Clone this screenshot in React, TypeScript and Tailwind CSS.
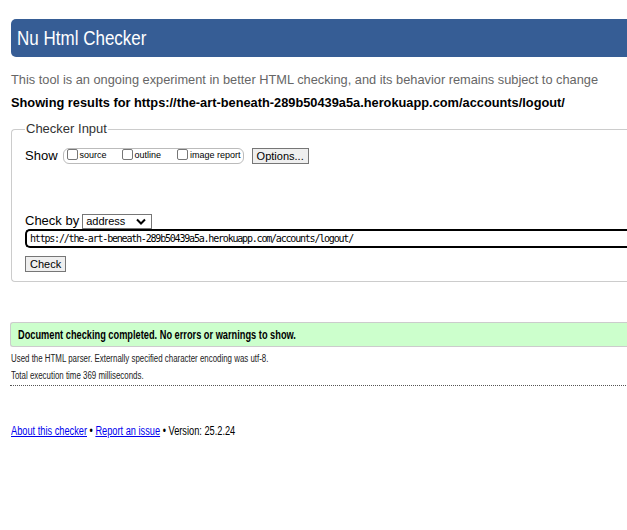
export default function App() {
  return (
    <div className="w-full h-[530px] overflow-hidden bg-white font-['Liberation_Sans',Arial,sans-serif] text-black">
      <div className="w-[700px] pl-[11px] pt-[19px]">
        <h1 className="h-[38px] rounded-l-[5px] bg-[#365d95] pl-[6px] text-[21px] leading-[38px] text-white">
          <span className="inline-block origin-left scale-x-[0.81] whitespace-nowrap">Nu Html Checker</span>
        </h1>

        <p className="mt-[14px] text-[12.8px] leading-[18px] text-[#666]">
          This tool is an ongoing experiment in better HTML checking, and its behavior remains subject to change
        </p>
        <p className="mt-[5px] text-[12.8px] font-bold leading-[18px]">
          Showing results for https://the-art-beneath-289b50439a5a.herokuapp.com/accounts/logout/
        </p>

        {/* Checker input fieldset */}
        <fieldset className="mt-[9px] h-[161px] rounded-l-[4px] border border-r-0 border-[#ccc] pl-[13px]">
          <legend className="px-[1px] text-[13px] leading-[16px] text-[#333]">Checker Input</legend>

          <div className="mt-[11px] flex h-[16px] items-center">
            <span className="text-[13px] leading-[16px]">Show</span>
            <div className="ml-[5px] flex h-[16px] items-center rounded-[6px] border border-[#bbb] pl-[3px] pr-[2px] text-[9px]">
              <label className="flex items-center">
                <span className="mb-[3px] h-[11px] w-[11px] rounded-[2px] border border-[#767676]" />
                <span className="ml-[2px]">source</span>
              </label>
              <label className="ml-[15px] flex items-center">
                <span className="mb-[3px] h-[11px] w-[11px] rounded-[2px] border border-[#767676]" />
                <span className="ml-[2px]">outline</span>
              </label>
              <label className="ml-[16px] flex items-center">
                <span className="mb-[3px] h-[11px] w-[11px] rounded-[2px] border border-[#767676]" />
                <span className="ml-[2px]">image report</span>
              </label>
            </div>
            <button className="ml-[8px] h-[16px] border border-[#767676] bg-[#efefef] px-[4px] text-[11px] leading-[14px]">
              Options...
            </button>
          </div>

          <div className="mt-[49px] flex h-[16px] items-center">
            <span className="text-[13px] leading-[16px]">Check by</span>
            <div className="ml-[3px] flex h-[15px] w-[70px] items-center justify-between border border-[#767676] pl-[3px] pr-[5px] text-[11px]">
              <span>address</span>
              <svg width="10" height="7" viewBox="0 0 10 7">
                <path d="M1 1.5 L5 5.5 L9 1.5" fill="none" stroke="#000" strokeWidth="2" />
              </svg>
            </div>
          </div>

          <div className="mt-0 flex h-[19px] items-center rounded-l-[5px] border-2 border-r-0 border-black pl-[3px] font-['DejaVu_Sans_Mono',monospace] text-[10px] tracking-[-1.2px]">
            https://the-art-beneath-289b50439a5a.herokuapp.com/accounts/logout/
          </div>

          <button className="mt-[8px] h-[16px] border border-[#767676] bg-[#efefef] px-[4px] text-[11px] leading-[14px]">
            Check
          </button>
        </fieldset>

        {/* Result */}
        <div className="ml-[-1px] mt-[40px] flex h-[25px] items-center rounded-l-[3px] border border-r-0 border-[#ccc] bg-[#ccffcc] pl-[7px] text-[12px] font-bold">
          <span className="inline-block origin-left scale-x-[0.77] whitespace-nowrap">
            Document checking completed. No errors or warnings to show.
          </span>
        </div>
        <p className="mt-[5px] text-[10px] leading-[14px] text-[#222]">
          <span className="inline-block origin-left scale-x-[0.79] whitespace-nowrap">
            Used the HTML parser. Externally specified character encoding was utf-8.
          </span>
        </p>
        <p className="mt-[3px] text-[10px] leading-[14px] text-[#222]">
          <span className="inline-block origin-left scale-x-[0.79] whitespace-nowrap">
            Total execution time 369 milliseconds.
          </span>
        </p>
        <div className="ml-[-1px] mt-[2px] border-t border-dotted border-[#555]" />

        <p className="mt-[38px] text-[12px] leading-[14px]">
          <span className="inline-block origin-left scale-x-[0.77] whitespace-nowrap">
            <a href="#" className="text-[#0000ee] underline">About this checker</a>
            {" • "}
            <a href="#" className="text-[#0000ee] underline">Report an issue</a>
            {" • Version: 25.2.24"}
          </span>
        </p>
      </div>
    </div>
  );
}
